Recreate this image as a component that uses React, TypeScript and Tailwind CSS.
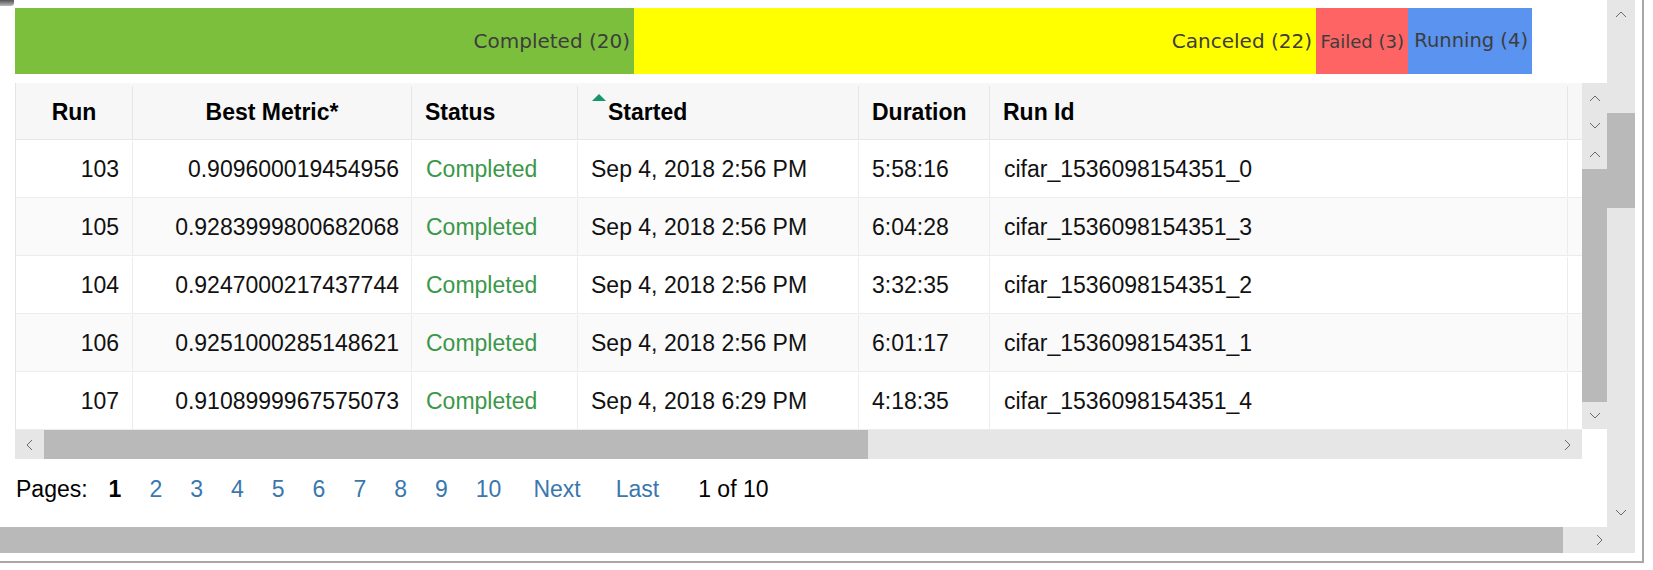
import React from "react";

type Dir = "up" | "down" | "left" | "right";

// thin chevron used by the scrollbars
function Chevron({ dir }: { dir: Dir }) {
  const paths: Record<Dir, string> = {
    up: "M1 7 L6 2 L11 7",
    down: "M1 2 L6 7 L11 2",
    left: "M7 1 L2 6 L7 11",
    right: "M2 1 L7 6 L2 11",
  };
  const vertical = dir === "up" || dir === "down";
  return (
    <svg
      width={vertical ? 12 : 9}
      height={vertical ? 9 : 12}
      viewBox={vertical ? "0 0 12 9" : "0 0 9 12"}
      fill="none"
      stroke="#6a6a6a"
      strokeWidth={1}
    >
      <path d={paths[dir]} />
    </svg>
  );
}

const segments = [
  { label: "Completed (20)", width: "w-[619px]", bg: "bg-[#7cbf3c]", text: "text-[20px]" },
  { label: "Canceled (22)", width: "w-[682px]", bg: "bg-[#ffff00]", text: "text-[20px]" },
  { label: "Failed (3)", width: "w-[92px]", bg: "bg-[#fe6464]", text: "text-[18px]" },
  { label: "Running (4)", width: "w-[124px]", bg: "bg-[#5a93f0]", text: "text-[19.5px]" },
];

const rows = [
  { run: 103, metric: "0.909600019454956", started: "Sep 4, 2018 2:56 PM", duration: "5:58:16", id: "cifar_1536098154351_0" },
  { run: 105, metric: "0.9283999800682068", started: "Sep 4, 2018 2:56 PM", duration: "6:04:28", id: "cifar_1536098154351_3" },
  { run: 104, metric: "0.9247000217437744", started: "Sep 4, 2018 2:56 PM", duration: "3:32:35", id: "cifar_1536098154351_2" },
  { run: 106, metric: "0.9251000285148621", started: "Sep 4, 2018 2:56 PM", duration: "6:01:17", id: "cifar_1536098154351_1" },
  { run: 107, metric: "0.9108999967575073", started: "Sep 4, 2018 6:29 PM", duration: "4:18:35", id: "cifar_1536098154351_4" },
];

const cols = "grid grid-cols-[117px_279px_166px_281px_131px_578px_15px]";

export default function App() {
  return (
    <div
      className="relative w-[1653px] h-[570px] bg-white overflow-hidden"
      style={{ fontFamily: '"Liberation Sans", Arial, sans-serif' }}
    >
      {/* scrap of a dark scrollbar in the corner */}
      <div className="absolute left-0 top-0 w-[14px] h-[6px] rounded-br-[3px] bg-gradient-to-b from-[#555] to-[#bbb]" />

      <div className="w-[1644px] h-[563px] border-r-[2px] border-b-[2px] border-[#a8a8a8] flex flex-col">
        <div className="flex h-[527px]">
          {/* main panel */}
          <div className="w-[1607px] h-full pl-[15px] flex flex-col">
            {/* status bar */}
            <div
              className="flex mt-[8px] h-[66px] text-[#3d3d3d]"
              style={{ fontFamily: '"DejaVu Sans", Verdana, sans-serif' }}
            >
              {segments.map((s) => (
                <div
                  key={s.label}
                  className={`${s.width} ${s.bg} ${s.text} flex items-center justify-end pr-[4px] whitespace-nowrap`}
                >
                  {s.label}
                </div>
              ))}
            </div>

            {/* table + its vertical scrollbar */}
            <div className="flex mt-[9px]">
              <div className="w-[1567px] border-l border-[#e4e4e4] text-[23px] text-[#111]">
                <div className={`${cols} h-[57px] pt-[3px] bg-[#f7f7f7] border-b border-[#e6e6e6] font-bold text-black`}>
                  <div className="flex items-center justify-center border-r border-[#e6e6e6]">Run</div>
                  <div className="flex items-center justify-center border-r border-[#e6e6e6]">Best Metric*</div>
                  <div className="flex items-center pl-[13px] border-r border-[#e6e6e6]">Status</div>
                  <div className="flex items-center pl-[14px] border-r border-[#e6e6e6]">
                    <span className="mb-[30px] mr-[2px] border-x-[7px] border-b-[7px] border-x-transparent border-b-[#17956b]" />
                    Started
                  </div>
                  <div className="flex items-center pl-[13px] border-r border-[#e6e6e6]">Duration</div>
                  <div className="flex items-center pl-[13px] border-r border-[#e6e6e6]">Run Id</div>
                  <div />
                </div>
                {rows.map((r, i) => (
                  <div
                    key={r.id}
                    className={`${cols} h-[58px] pt-[1px] border-b border-[#ececec] ${i % 2 === 1 ? "bg-[#fafafa]" : "bg-white"}`}
                  >
                    <div className="flex items-center justify-end pr-[13px] border-r border-[#ececec]">{r.run}</div>
                    <div className="flex items-center justify-end pr-[12px] border-r border-[#ececec]">{r.metric}</div>
                    <div className="flex items-center pl-[14px] border-r border-[#ececec] text-[#3a9848]">Completed</div>
                    <div className="flex items-center pl-[13px] border-r border-[#ececec]">{r.started}</div>
                    <div className="flex items-center pl-[13px] border-r border-[#ececec]">{r.duration}</div>
                    <div className="flex items-center pl-[14px] border-r border-[#ececec]">{r.id}</div>
                    <div />
                  </div>
                ))}
              </div>

              {/* inner vertical scrollbars */}
              <div className="w-[25px] flex flex-col">
                <div className="h-[57px] bg-[#e6e6e6] flex flex-col items-center justify-center gap-[18px]">
                  <Chevron dir="up" />
                  <Chevron dir="down" />
                </div>
                <div className="h-[289px] bg-[#e6e6e6] flex flex-col">
                  <div className="h-[29px] flex items-center justify-center">
                    <Chevron dir="up" />
                  </div>
                  <div className="h-[233px] bg-[#b9b9b9]" />
                  <div className="flex-1 flex items-center justify-center">
                    <Chevron dir="down" />
                  </div>
                </div>
              </div>
            </div>

            {/* inner horizontal scrollbar */}
            <div className="w-[1567px] h-[29px] bg-[#e6e6e6] flex items-center">
              <div className="w-[29px] flex justify-center">
                <Chevron dir="left" />
              </div>
              <div className="w-[824px] h-full bg-[#b9b9b9]" />
              <div className="flex-1" />
              <div className="w-[29px] flex justify-center">
                <Chevron dir="right" />
              </div>
            </div>

            {/* pagination */}
            <div className="h-[60px] flex items-center text-[23px] text-black">
              <span className="ml-[1px]">Pages:</span>
              <span className="ml-[21px] font-bold">1</span>
              {[2, 3, 4, 5, 6, 7, 8, 9, 10].map((n) => (
                <a key={n} className="ml-[28px] text-[#3a77ad] cursor-pointer">
                  {n}
                </a>
              ))}
              <a className="ml-[32px] text-[#3a77ad] cursor-pointer">Next</a>
              <a className="ml-[35px] text-[#3a77ad] cursor-pointer">Last</a>
              <span className="ml-[39px]">1 of 10</span>
            </div>
          </div>

          {/* outer vertical scrollbar */}
          <div className="w-[28px] h-full bg-[#e6e6e6] flex flex-col">
            <div className="h-[28px] flex items-center justify-center">
              <Chevron dir="up" />
            </div>
            <div className="h-[85px]" />
            <div className="h-[95px] bg-[#b9b9b9]" />
            <div className="flex-1" />
            <div className="h-[30px] flex items-center justify-center">
              <Chevron dir="down" />
            </div>
          </div>
        </div>

        {/* outer horizontal scrollbar */}
        <div className="w-[1635px] h-[26px] bg-[#e6e6e6] flex">
          <div className="w-[1563px] h-full bg-[#b9b9b9]" />
          <div className="flex-1 flex items-center justify-center">
            <Chevron dir="right" />
          </div>
        </div>
      </div>
    </div>
  );
}
